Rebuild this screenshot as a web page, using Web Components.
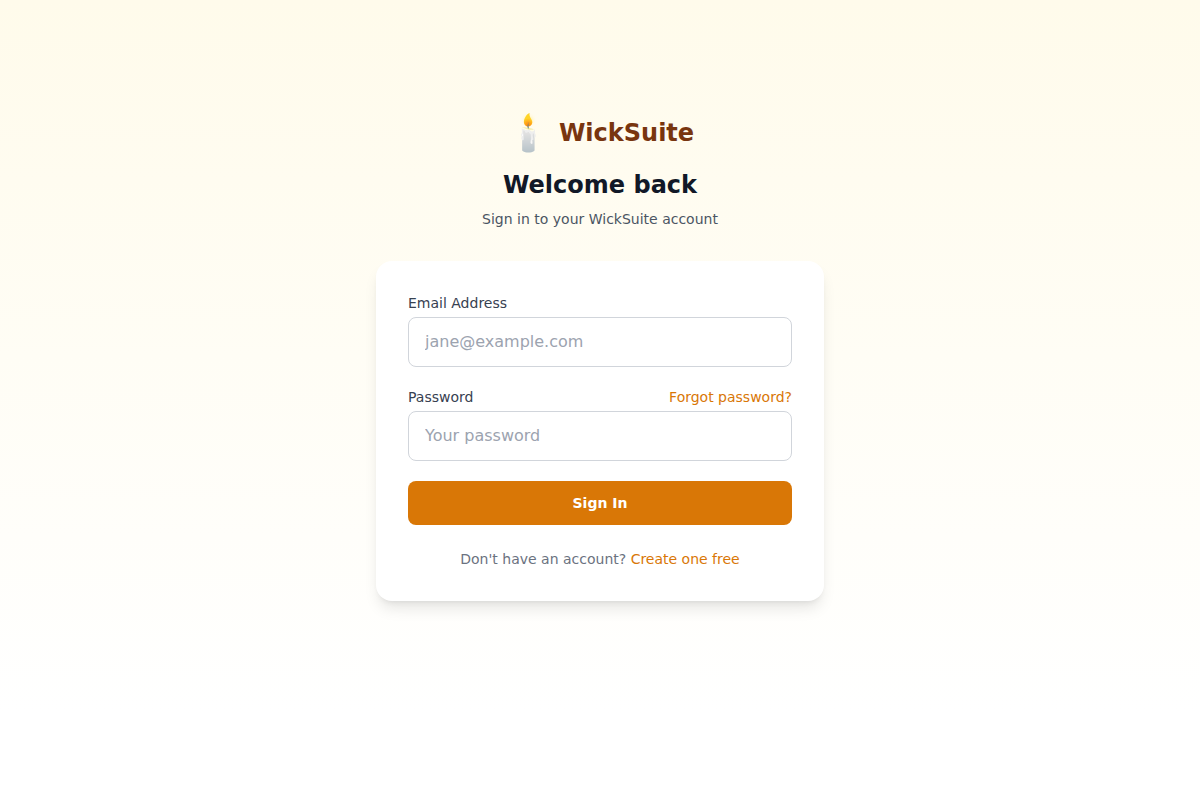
<!DOCTYPE html>
<html lang="en">
<head>
<meta charset="utf-8">
<meta name="viewport" content="width=device-width, initial-scale=1">
<title>Sign in - WickSuite</title>
<style>
  body { margin: 0; background: #fff; font-family: "DejaVu Sans", sans-serif; font-size: 14px; line-height: 20px; color: #111827; }
</style>
</head>
<body>
<auth-page>
  <auth-header slot="header">
    <wick-brand slot="brand">WickSuite</wick-brand>
    <span slot="title">Welcome back</span>
    <span slot="subtitle">Sign in to your WickSuite account</span>
  </auth-header>
  <sign-in-card></sign-in-card>
</auth-page>

<script>
const define = (name, html, setup) => {
  const template = document.createElement('template');
  template.innerHTML = html;
  customElements.define(name, class extends HTMLElement {
    constructor() {
      super();
      this.attachShadow({ mode: 'open' }).append(template.content.cloneNode(true));
    }
    connectedCallback() {
      if (setup) setup(this, this.shadowRoot);
    }
  });
};

define('auth-page', `
  <style>
    :host { display: block; padding: 113px 16px;
            background: linear-gradient(to bottom, #fffbeb, #ffffff); }
    main { max-width: 448px; margin: 0 auto; display: flex; flex-direction: column; gap: 32px; }
  </style>
  <main><slot name="header"></slot><slot></slot></main>`);

define('wick-brand', `
  <style>
    :host { display: block; }
    a { display: inline-flex; align-items: center; gap: 8px; color: #78350f; text-decoration: none; }
    .candle { font-size: 36px; line-height: 40px; }
    .name { font-size: 24px; line-height: 32px; font-weight: 700; }
  </style>
  <a href="#"><span class="candle">🕯️</span><span class="name"><slot></slot></span></a>`);

define('auth-header', `
  <style>
    :host { display: flex; flex-direction: column; align-items: center; text-align: center; }
    h1 { margin: 16px 0 8px; font-size: 24px; line-height: 32px; font-weight: 700; color: #111827; }
    p { margin: 0; color: #4b5563; }
    .brand { display: flex; }
  </style>
  <div class="brand"><slot name="brand"></slot></div>
  <h1><slot name="title"></slot></h1>
  <p><slot name="subtitle"></slot></p>`);

define('text-field', `
  <style>
    :host { display: block; }
    .top { display: flex; justify-content: space-between; margin-bottom: 4px; }
    label { font-weight: 500; color: #374151; }
    input { display: block; box-sizing: border-box; width: 100%; height: 50px; margin: 0; padding: 12px 16px 14px;
            border: 1px solid #d1d5db; border-radius: 8px; background: #fff; color: #111827;
            font: inherit; font-size: 16px; line-height: 22px; }
    input::placeholder { color: #9ca3af; opacity: 1; }
    input:focus { outline: 2px solid #f59e0b; outline-offset: -1px; }
  </style>
  <div class="top"><label for="control"></label><slot></slot></div>
  <input id="control">`,
  (host, root) => {
    root.querySelector('label').textContent = host.getAttribute('label');
    const input = root.querySelector('input');
    input.type = host.getAttribute('type');
    input.placeholder = host.getAttribute('placeholder');
    input.autocomplete = host.getAttribute('autocomplete');
  });

define('sign-in-card', `
  <style>
    :host { display: block; padding: 32px; background: #fff; border-radius: 16px;
            box-shadow: 0 10px 15px -3px rgb(0 0 0 / 0.1), 0 4px 6px -4px rgb(0 0 0 / 0.1); }
    form { display: flex; flex-direction: column; gap: 20px; }
    a { color: #d97706; font-weight: 500; text-decoration: none; }
    a:hover { text-decoration: underline; }
    button { padding: 12px 16px; border: 0; border-radius: 8px; background: #d97706; color: #fff;
             font: inherit; font-weight: 600; cursor: pointer; }
    button:hover { background: #b45309; }
    p { margin: 24px 0 0; text-align: center; color: #6b7280; }
  </style>
  <form>
    <text-field label="Email Address" type="email" placeholder="jane@example.com" autocomplete="email"></text-field>
    <text-field label="Password" type="password" placeholder="Your password" autocomplete="current-password">
      <a href="#">Forgot password?</a>
    </text-field>
    <button type="submit">Sign In</button>
  </form>
  <p>Don't have an account? <a href="#">Create one free</a></p>`);
</script>
</body>
</html>
